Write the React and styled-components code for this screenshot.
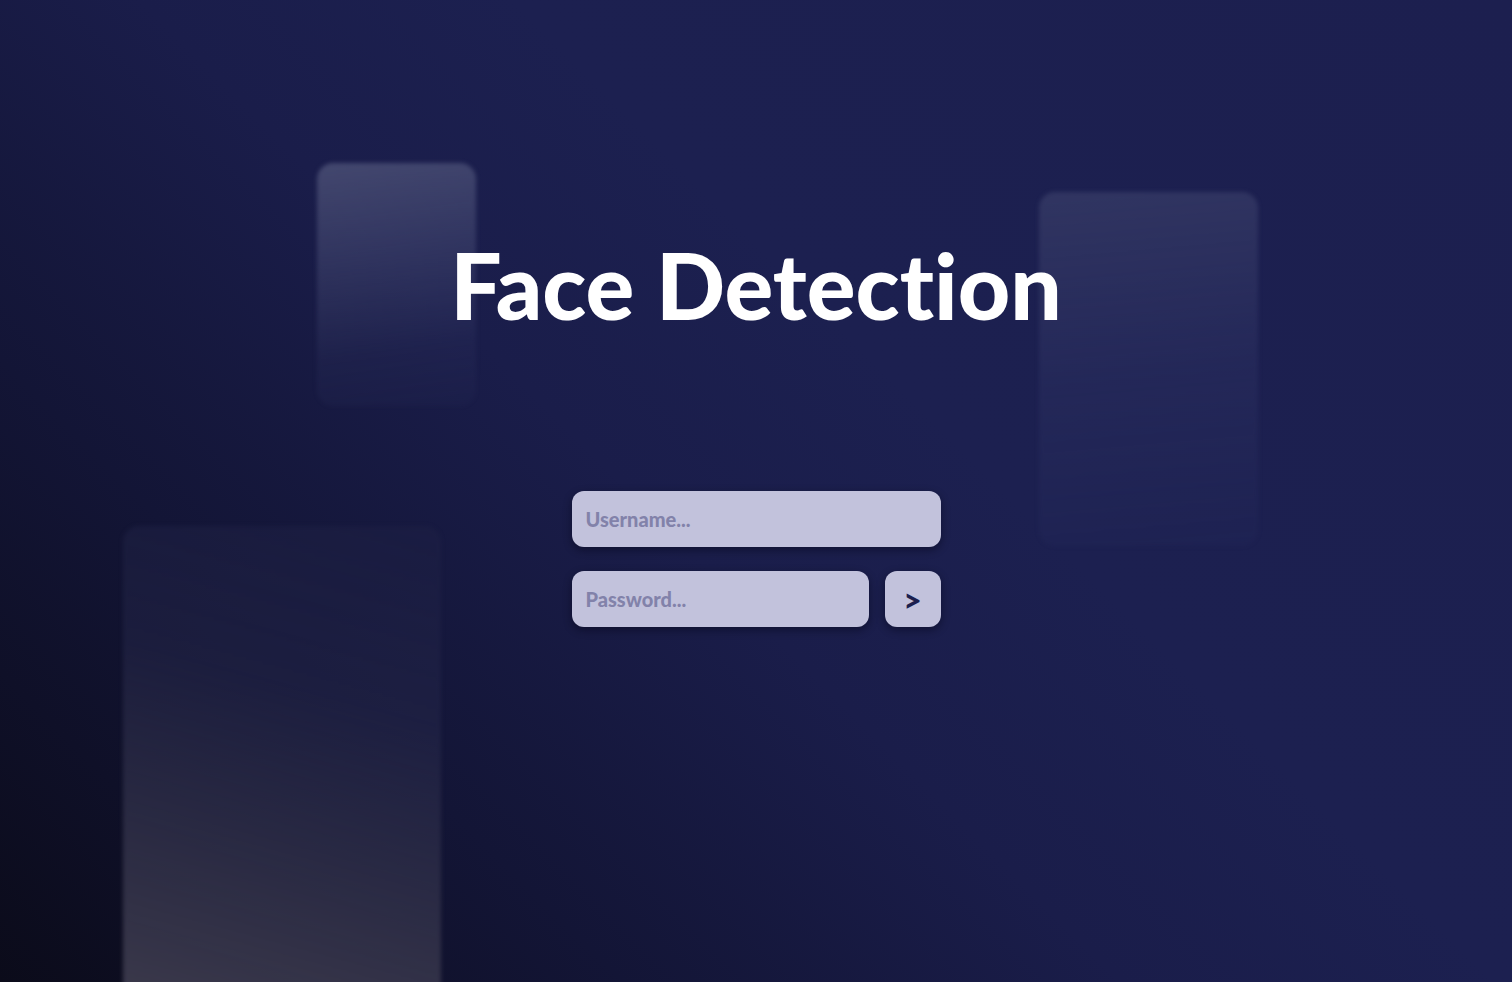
import React, { useState } from 'react'
import styled, { createGlobalStyle } from 'styled-components'

const GlobalStyle = createGlobalStyle`
  html, body {
    margin: 0;
    padding: 0;
    background: #151840;
  }
  * {
    box-sizing: border-box;
  }
`

const Page = styled.div`
  position: relative;
  width: 100vw;
  height: 100vh;
  overflow: hidden;
  background: linear-gradient(45deg, #0b0b1a 0%, #131536 25%, #1a1d4a 45%, #1c2050 60%, #1c1f4f 100%);
  font-family: Lato, 'Noto Sans', sans-serif;
  display: flex;
  flex-direction: column;
  align-items: center;
`

const Glass = styled.div`
  position: absolute;
  border-radius: 16px;
  filter: blur(2px);
  background: ${(p) => p.$bg};
`

const Title = styled.h1`
  position: relative;
  margin: 230px 0 0;
  font-size: 91px;
  font-weight: 900;
  line-height: 110px;
  color: #ffffff;
  font-variant-ligatures: none;
`

const Form = styled.form`
  position: relative;
  margin-top: 151px;
  width: 369px;
  display: flex;
  flex-direction: column;
  gap: 24px;
`

const Row = styled.div`
  display: flex;
  gap: 16px;
`

const Field = styled.input`
  width: 100%;
  min-width: 0;
  height: 56px;
  border: none;
  outline: none;
  border-radius: 12px;
  padding: 0 14px;
  background: #c2c2dc;
  box-shadow: 0 3px 8px rgba(5, 5, 20, 0.45);
  font-family: Lato, 'Noto Sans', sans-serif;
  font-size: 20px;
  font-weight: 900;
  color: #1c1f4f;
  &::placeholder {
    color: #8282aa;
  }
`

const Submit = styled.button`
  width: 56px;
  height: 56px;
  flex: none;
  border: none;
  border-radius: 12px;
  background: #c2c2dc;
  box-shadow: 0 3px 8px rgba(5, 5, 20, 0.45);
  font-family: Lato, 'Noto Sans', sans-serif;
  font-size: 32px;
  font-weight: 900;
  color: #1c1f4f;
  cursor: pointer;
  padding: 0;
`

const App = () => {
  const [user, setUser] = useState('')
  const [pass, setPass] = useState('')

  return (
    <Page>
      <GlobalStyle />
      <Glass
        style={{ left: 317, top: 163, width: 159, height: 243 }}
        $bg="linear-gradient(172deg, rgba(95,100,135,0.6) 0%, rgba(80,85,125,0.45) 35%, rgba(55,60,105,0.2) 75%, rgba(45,50,95,0.12) 100%)"
      />
      <Glass
        style={{ left: 1039, top: 192, width: 219, height: 354 }}
        $bg="linear-gradient(175deg, rgba(75,80,120,0.45) 0%, rgba(55,60,110,0.3) 50%, rgba(40,45,95,0.18) 100%)"
      />
      <Glass
        style={{ left: 123, top: 526, width: 318, height: 480 }}
        $bg="linear-gradient(15deg, rgba(62,60,78,0.95) 0%, rgba(50,50,75,0.75) 35%, rgba(38,40,75,0.5) 65%, rgba(32,34,70,0.4) 100%)"
      />
      <Title>Face Detection</Title>
      <Form onSubmit={(e) => e.preventDefault()}>
        <Field
          placeholder="Username..."
          value={user}
          onChange={(e) => setUser(e.target.value)}
        />
        <Row>
          <Field
            type="password"
            placeholder="Password..."
            value={pass}
            onChange={(e) => setPass(e.target.value)}
          />
          <Submit type="submit">&gt;</Submit>
        </Row>
      </Form>
    </Page>
  )
}

export default App
